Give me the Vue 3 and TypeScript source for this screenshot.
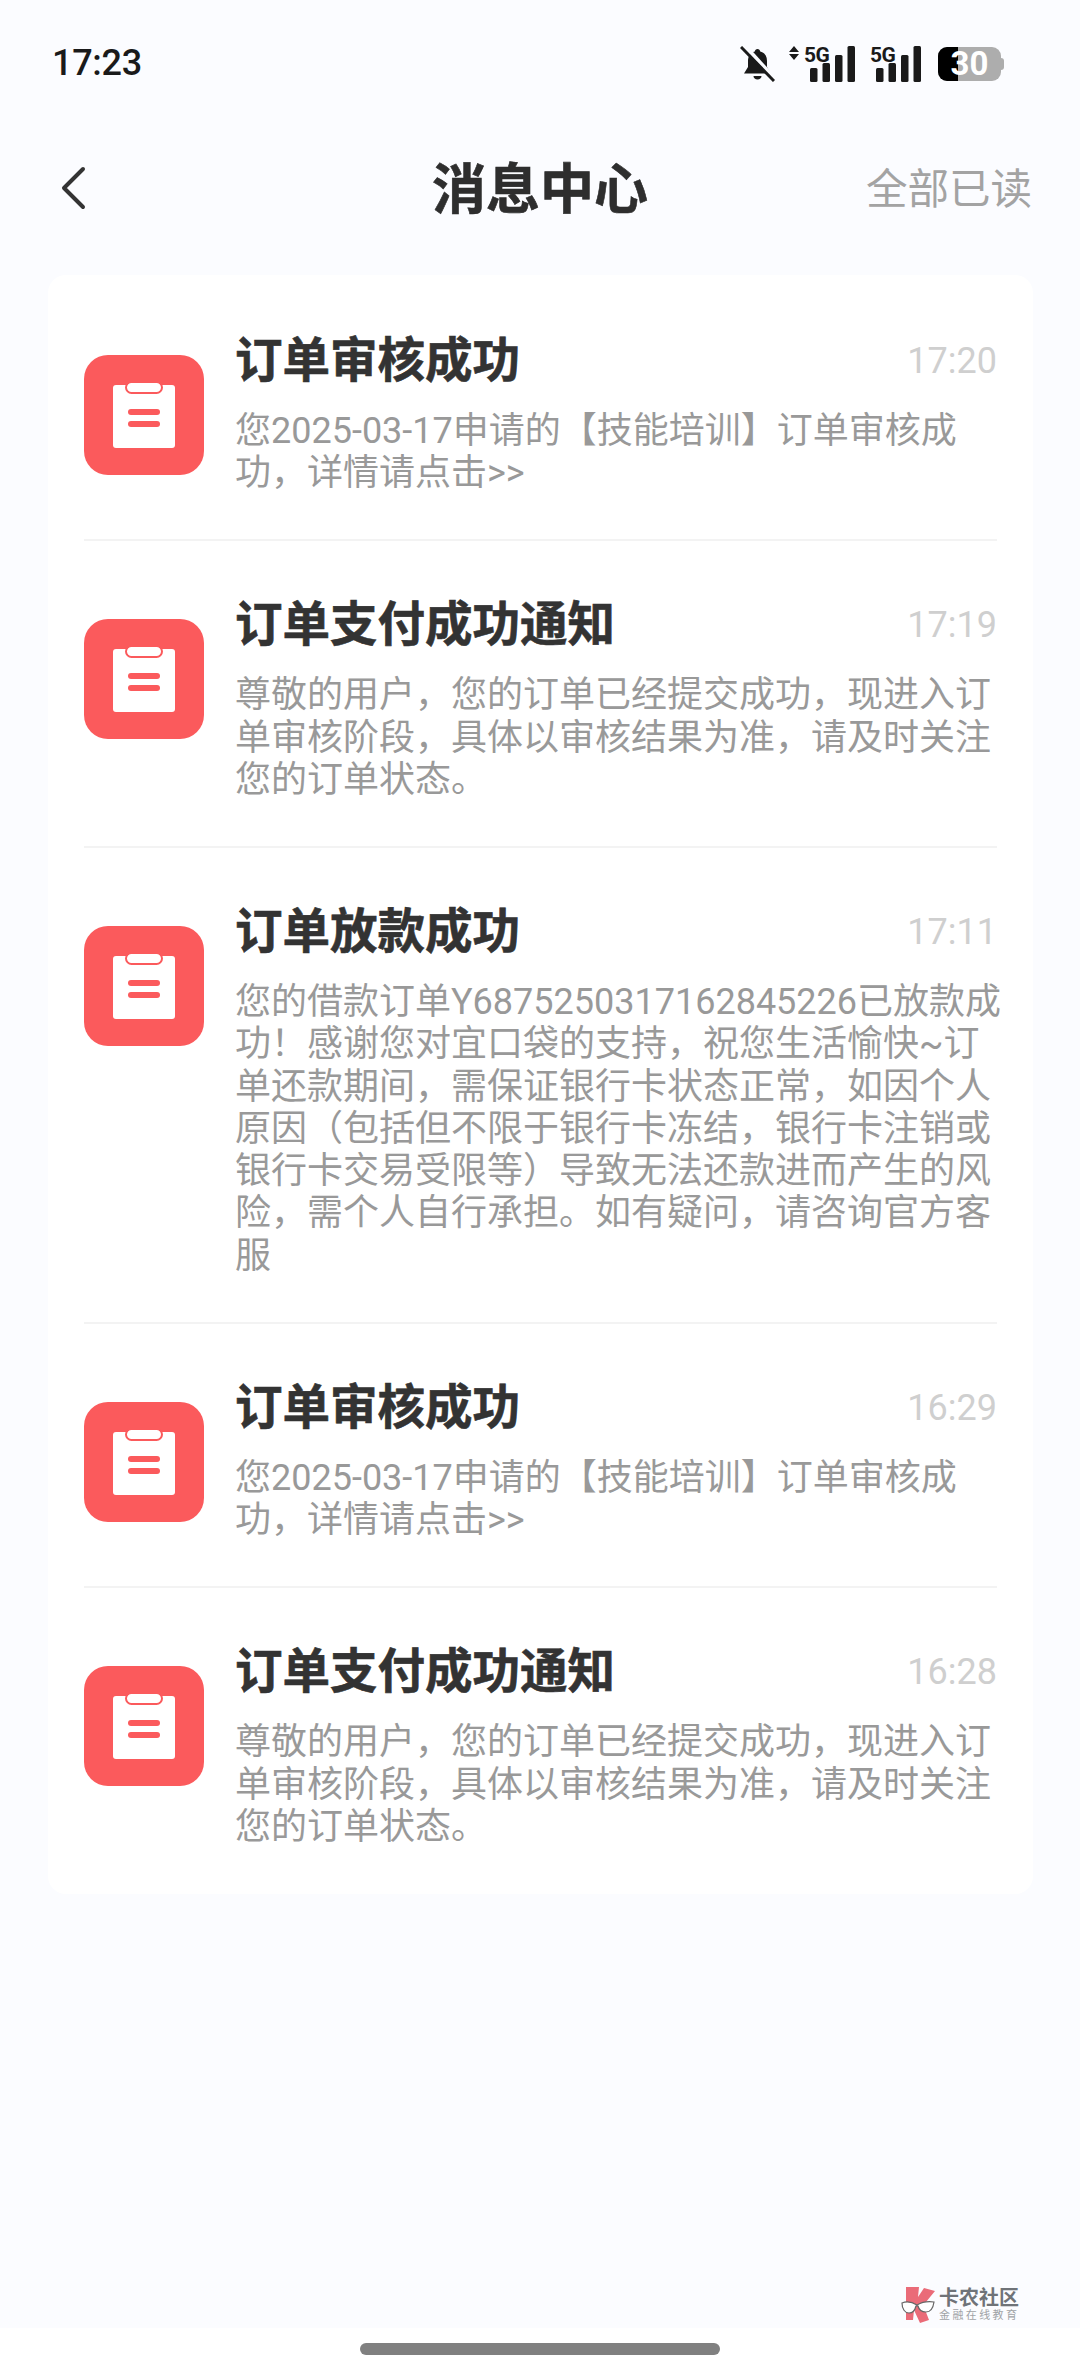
<script setup lang="ts">
interface Message {
  title: string
  time: string
  body: string
}

const paid = '尊敬的用户\uFF0C您的订单已经提交成功\uFF0C现进入订单审核阶段\uFF0C具体以审核结果为准\uFF0C请及时关注您的订单状态。'
const audited = '您2025-03-17申请的【技能培训】订单审核成功\uFF0C详情请点击>>'

const messages: Message[] = [
  { title: '订单审核成功', time: '17:20', body: audited },
  { title: '订单支付成功通知', time: '17:19', body: paid },
  {
    title: '订单放款成功',
    time: '17:11',
    body: '您的借款订单Y6875250317162845226已放款成功\uFF01感谢您对宜口袋的支持\uFF0C祝您生活愉快~订单还款期间\uFF0C需保证银行卡状态正常\uFF0C如因个人原因\uFF08包括但不限于银行卡冻结\uFF0C银行卡注销或银行卡交易受限等\uFF09导致无法还款进而产生的风险\uFF0C需个人自行承担。如有疑问\uFF0C请咨询官方客服',
  },
  { title: '订单审核成功', time: '16:29', body: audited },
  { title: '订单支付成功通知', time: '16:28', body: paid },
]

const bars = [
  { x: 0, y: 22, h: 14 },
  { x: 12.5, y: 17, h: 19 },
  { x: 25, y: 9, h: 27 },
  { x: 37.5, y: 0, h: 36 },
]
</script>

<template>
  <div class="page">
    <div class="status">
      <span class="clock">17:23</span>
      <div class="status-icons">
        <svg class="bell" width="35" height="36" viewBox="0 0 35 36">
          <path d="M17.500 3c1.500 0 2.500 1 2.700 2.400 4.500 1.200 6.800 5 6.800 9.600v6l4 6.500H4l4-6.500v-6c0-4.600 2.300-8.400 6.800-9.600C15 4 16 3 17.500 3z" fill="#1a1a1a" />
          <path d="M13.500 30h8c0 2-1.800 3.500-4 3.500s-4-1.500-4-3.500z" fill="#1a1a1a" />
          <path d="M5 0l30 33" stroke="#fbfcff" stroke-width="4" />
          <path d="M1 1l33 34" stroke="#1a1a1a" stroke-width="3" />
        </svg>
        <div class="signal first">
          <svg class="updown" width="10" height="14" viewBox="0 0 10 14">
            <path d="M5 0l5 6H0zM5 14L0 8h10z" fill="#1a1a1a" />
          </svg>
          <span class="net">5G</span>
          <svg class="bars" width="45" height="36" viewBox="0 0 45 36">
            <rect v-for="b in bars" :key="b.x" :x="b.x" :y="b.y" width="7.500" :height="b.h" rx="1.500" fill="#1a1a1a" />
          </svg>
        </div>
        <div class="signal second">
          <span class="net">5G</span>
          <svg class="bars" width="45" height="36" viewBox="0 0 45 36">
            <rect v-for="b in bars" :key="b.x" :x="b.x" :y="b.y" width="7.500" :height="b.h" rx="1.500" fill="#1a1a1a" />
          </svg>
        </div>
        <div class="battery">
          <span class="battery-level"></span>
          <span class="battery-text">30</span>
          <span class="battery-cap"></span>
        </div>
      </div>
    </div>

    <header class="nav">
      <svg class="back" width="28" height="44" viewBox="0 0 28 44">
        <path d="M25 3L6 22l19 19" fill="none" stroke="#333" stroke-width="4" stroke-linecap="round" stroke-linejoin="round" />
      </svg>
      <h1>消息中心</h1>
      <span class="read-all">全部已读</span>
    </header>

    <main class="content">
      <section class="card">
        <article v-for="(m, i) in messages" :key="i" class="item">
          <div class="icon">
            <svg width="64" height="66" viewBox="0 0 64 66">
              <rect x="1" y="3" width="62" height="63" rx="3" fill="#fff" />
              <rect x="14" y="0" width="36" height="11" rx="5.500" fill="#fff" stroke="#fb5a5c" stroke-width="2" />
              <rect x="16" y="27" width="32" height="6" rx="3" fill="#fb5a5c" />
              <rect x="16" y="39" width="32" height="6" rx="3" fill="#fb5a5c" />
            </svg>
          </div>
          <div class="text">
            <div class="head">
              <h3>{{ m.title }}</h3>
              <time>{{ m.time }}</time>
            </div>
            <p>{{ m.body }}</p>
          </div>
        </article>
      </section>

      <div class="watermark">
        <svg width="34" height="36" viewBox="0 0 34 36">
          <path d="M5 0h13l-1 10 6-9 11 3-9 11H12l9 0 7 18-9 3-6-13-1 10H5z" fill="#ea6b78" />
          <path d="M1 16c5-2 10-1 15 2 5-3 10-4 17-3-1 7-4 10-8 10-4 0-7-2-8-6h-2c-1 4-3 7-7 7-4 0-7-4-7-10z" fill="#fff" stroke="#666" stroke-width="1.200" />
        </svg>
        <div class="mark-text">
          <strong>卡农社区</strong>
          <small>金融在线教育</small>
        </div>
      </div>
    </main>

    <footer class="home">
      <span class="home-bar"></span>
    </footer>
  </div>
</template>

<style>
html,
body {
  margin: 0;
  background: #fff;
}
</style>

<style scoped>
.page {
  display: flex;
  flex-direction: column;
  width: 1080px;
  height: 2376px;
  font-family: Roboto, "Noto Sans CJK SC", sans-serif;
  background: #fbfcff;
  overflow: hidden;
}

.status {
  display: flex;
  align-items: center;
  justify-content: space-between;
  height: 58px;
  padding: 35px 79px 0 52px;
  color: #1a1a1a;
}

.clock {
  margin-top: -2px;
  font-size: 36px;
  font-weight: 500;
  letter-spacing: -0.3px;
}

.status-icons {
  display: flex;
  align-items: center;
}

.bell {
  margin-right: 14px;
}

.signal {
  position: relative;
  height: 36px;
}

.signal.first {
  width: 66px;
}

.signal.second {
  width: 51px;
  margin-left: 15px;
}

.updown {
  position: absolute;
  top: 0;
  left: 0;
}

.net {
  position: absolute;
  top: -3px;
  font-size: 21px;
  font-weight: 700;
  line-height: 24px;
  letter-spacing: -0.5px;
}

.first .net {
  left: 15px;
}

.second .net {
  left: 0;
}

.bars {
  position: absolute;
  right: 0;
  bottom: 0;
}

.battery {
  position: relative;
  width: 63px;
  height: 34px;
  margin-left: 17px;
  border-radius: 9px;
  background: #adadad;
}

.battery-level {
  position: absolute;
  top: 0;
  bottom: 0;
  left: 0;
  width: 20px;
  border-radius: 9px 0 0 9px;
  background: #000;
}

.battery-text {
  position: absolute;
  inset: 0;
  color: #fff;
  font-size: 33px;
  font-weight: 700;
  line-height: 34px;
  text-align: center;
}

.battery-cap {
  position: absolute;
  top: 11px;
  right: -3px;
  width: 3px;
  height: 12px;
  border-radius: 0 3px 3px 0;
  background: #adadad;
}

.nav {
  display: flex;
  position: relative;
  align-items: center;
  justify-content: space-between;
  height: 182px;
  padding: 3px 48px 0 58px;
  box-sizing: border-box;
}

.back {
  display: block;
  margin-top: 4px;
}

h1 {
  position: absolute;
  left: 0;
  right: 0;
  margin: 0;
  color: #2e2e2e;
  font-size: 54px;
  font-weight: 700;
  text-align: center;
  -webkit-text-stroke: 0.6px #2e2e2e;
  pointer-events: none;
}

.read-all {
  color: #a3a3a3;
  font-size: 41.500px;
}

.content {
  position: relative;
  flex: 1;
  padding: 0 47px 0 48px;
}

.card {
  padding: 2px 36px 0;
  border-radius: 18px;
  background: #fff;
}

.item {
  display: flex;
  align-items: flex-start;
  gap: 31px;
  padding-bottom: 45px;
  border-bottom: 2px solid #f3f3f3;
}

.item:last-child {
  padding-bottom: 46px;
  border-bottom: 0;
}

.icon {
  display: flex;
  flex: none;
  align-items: center;
  justify-content: center;
  width: 120px;
  height: 120px;
  margin-top: 78px;
  border-radius: 24px;
  background: #fb5a5c;
}

.text {
  flex: 1;
  min-width: 0;
  padding-top: 50px;
}

.head {
  display: flex;
  align-items: center;
  justify-content: space-between;
  height: 68px;
}

h3 {
  margin: 0;
  color: #333;
  font-size: 47.500px;
  font-weight: 700;
  line-height: 68px;
  -webkit-text-stroke: 0.6px #333;
}

time {
  color: #cfcfcf;
  font-size: 36px;
}

p {
  margin: 15px -8px 0 0;
  color: #999;
  font-size: 36px;
  line-height: 42.240px;
}

.watermark {
  display: flex;
  position: absolute;
  right: 61px;
  bottom: 5px;
  align-items: center;
  gap: 4px;
}

.mark-text {
  display: flex;
  flex-direction: column;
  width: 80px;
}

.mark-text strong {
  color: #6f7378;
  font-size: 20px;
  font-weight: 700;
  line-height: 22px;
  white-space: nowrap;
}

.mark-text small {
  color: #a0a3a6;
  font-size: 11px;
  line-height: 14px;
  letter-spacing: 2.400px;
  white-space: nowrap;
}

.home {
  display: flex;
  flex: none;
  justify-content: center;
  height: 48px;
  background: #fff;
}

.home-bar {
  width: 360px;
  height: 12px;
  margin-top: 15px;
  border-radius: 6px;
  background: #808080;
}
</style>
